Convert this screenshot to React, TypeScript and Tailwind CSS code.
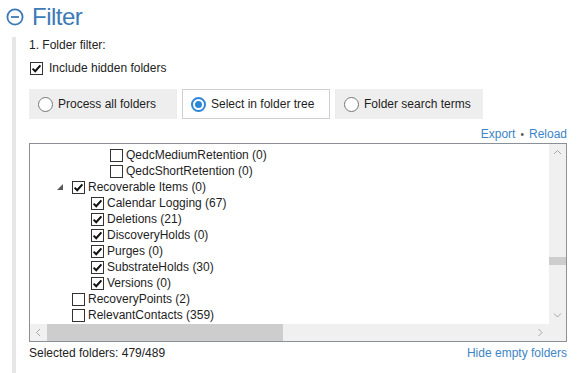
import React from 'react';

const FONT = "font-['Liberation_Sans',Arial,sans-serif]";

type Row = { level: number; label: string; checked: boolean; expanded?: boolean };

const ROWS: Row[] = [
  { level: 3, label: 'QedcMediumRetention (0)', checked: false },
  { level: 3, label: 'QedcShortRetention (0)', checked: false },
  { level: 1, label: 'Recoverable Items (0)', checked: true, expanded: true },
  { level: 2, label: 'Calendar Logging (67)', checked: true },
  { level: 2, label: 'Deletions (21)', checked: true },
  { level: 2, label: 'DiscoveryHolds (0)', checked: true },
  { level: 2, label: 'Purges (0)', checked: true },
  { level: 2, label: 'SubstrateHolds (30)', checked: true },
  { level: 2, label: 'Versions (0)', checked: true },
  { level: 1, label: 'RecoveryPoints (2)', checked: false },
  { level: 1, label: 'RelevantContacts (359)', checked: false },
  { level: 1, label: '', checked: false },
];

function Check({ checked }: { checked: boolean }) {
  return (
    <span className="w-[13px] h-[13px] shrink-0 border border-[#333] bg-white flex items-center justify-center">
      {checked && (
        <svg width="11" height="11" viewBox="0 0 11 11">
          <path d="M1.6 5.6 L4.2 8.2 L9.4 2.4" fill="none" stroke="#111" strokeWidth="2" />
        </svg>
      )}
    </span>
  );
}

function Radio({ label, selected }: { label: string; selected?: boolean }) {
  return (
    <div
      className={
        'w-[148px] h-[30px] flex items-center gap-[5px] ' +
        (selected ? 'bg-white border border-[#cfcfcf] pl-[8px]' : 'bg-[#eeeeee] pl-[9px]')
      }
    >
      {selected ? (
        <span className="w-[15px] h-[15px] rounded-full border-[2px] border-[#2e86d6] flex items-center justify-center">
          <span className="w-[7px] h-[7px] rounded-full bg-[#2e86d6]" />
        </span>
      ) : (
        <span className="w-[15px] h-[15px] rounded-full border-[1.5px] border-[#777] bg-white" />
      )}
      <span className="text-[12px] text-[#1e1e1e]">{label}</span>
    </div>
  );
}

function Chevron({ dir }: { dir: 'up' | 'down' | 'left' | 'right' }) {
  const d = {
    up: 'M1 5 L4.5 1.5 L8 5',
    down: 'M1 1.5 L4.5 5 L8 1.5',
    left: 'M5 1 L1.5 4.5 L5 8',
    right: 'M1.5 1 L5 4.5 L1.5 8',
  }[dir];
  const vertical = dir === 'up' || dir === 'down';
  return (
    <svg width={vertical ? 9 : 7} height={vertical ? 7 : 9} viewBox={vertical ? '0 0 9 7' : '0 0 7 9'}>
      <path d={d} fill="none" stroke="#a6a6a6" strokeWidth="1" />
    </svg>
  );
}

export default function App() {
  return (
    <div className={`w-[580px] h-[373px] bg-white overflow-hidden ${FONT}`}>
      <div className="h-[37px] flex items-center pl-[6px] gap-[8px] pb-[3px]">
        <svg width="18" height="18" viewBox="0 0 18 18">
          <circle cx="9" cy="9" r="7.6" fill="none" stroke="#3d7ab8" strokeWidth="1.8" />
          <path d="M5 9 H13" stroke="#3d7ab8" strokeWidth="1.8" />
        </svg>
        <span className="text-[24px] leading-none tracking-[-0.5px] text-[#3d7ab8]">Filter</span>
      </div>

      <div className="ml-[12px] w-[555px] h-[336px] border-l-[4px] border-[#e6e6e6] pl-[13px]">
        <div className="h-[16px] text-[12px] leading-[16px] text-[#222]">1. Folder filter:</div>
        <div className="mt-[7px] h-[16px] flex items-center gap-[6px] pl-px">
          <Check checked />
          <span className="text-[12px] text-[#222]">Include hidden folders</span>
        </div>

        <div className="mt-[13px] flex gap-[5px]">
          <Radio label="Process all folders" />
          <Radio label="Select in folder tree" selected />
          <Radio label="Folder search terms" />
        </div>

        <div className="mt-[7px] h-[16px] flex justify-end items-center gap-[5px] text-[12px]">
          <span className="text-[#3d85c6]">Export</span>
          <span className="text-[#555] text-[10px]">•</span>
          <span className="text-[#3d85c6]">Reload</span>
        </div>

        <div className="mt-px h-[199px] border border-[#8c8f96] flex flex-col">
          <div className="flex h-[180px]">
            <div className="flex-1 overflow-hidden pt-[3px]">
              {ROWS.map((r, i) => (
                <div key={i} className="h-[16px] flex items-center text-[12px] text-[#1e1e1e] whitespace-nowrap">
                  <span className="shrink-0" style={{ width: 4 + 19 * r.level }} />
                  <span className="w-[19px] shrink-0 flex items-center">
                    {r.expanded && (
                      <svg width="6" height="6" viewBox="0 0 6 6" className="ml-[4px]">
                        <path d="M6 0 L6 6 L0 6 Z" fill="#595959" />
                      </svg>
                    )}
                  </span>
                  <Check checked={r.checked} />
                  {r.label && <span className="ml-[3px]">{r.label}</span>}
                </div>
              ))}
            </div>
            <div className="w-[17px] bg-[#f0f0f0] flex flex-col items-center">
              <div className="h-[17px] flex items-center justify-center">
                <Chevron dir="up" />
              </div>
              <div className="h-[96px]" />
              <div className="w-[17px] h-[8px] bg-[#cdcdcd]" />
              <div className="flex-1" />
              <div className="h-[17px] flex items-center justify-center">
                <Chevron dir="down" />
              </div>
            </div>
          </div>
          <div className="h-[17px] flex bg-[#f0f0f0]">
            <div className="w-[17px] flex items-center justify-center">
              <Chevron dir="left" />
            </div>
            <div className="w-[236px] bg-[#cdcdcd]" />
            <div className="flex-1" />
            <div className="w-[17px] flex items-center justify-center">
              <Chevron dir="right" />
            </div>
            <div className="w-[17px]" />
          </div>
        </div>

        <div className="mt-[3px] h-[16px] flex justify-between items-center text-[12px]">
          <span className="text-[#222]">Selected folders: 479/489</span>
          <span className="text-[#3d85c6]">Hide empty folders</span>
        </div>
      </div>
    </div>
  );
}
